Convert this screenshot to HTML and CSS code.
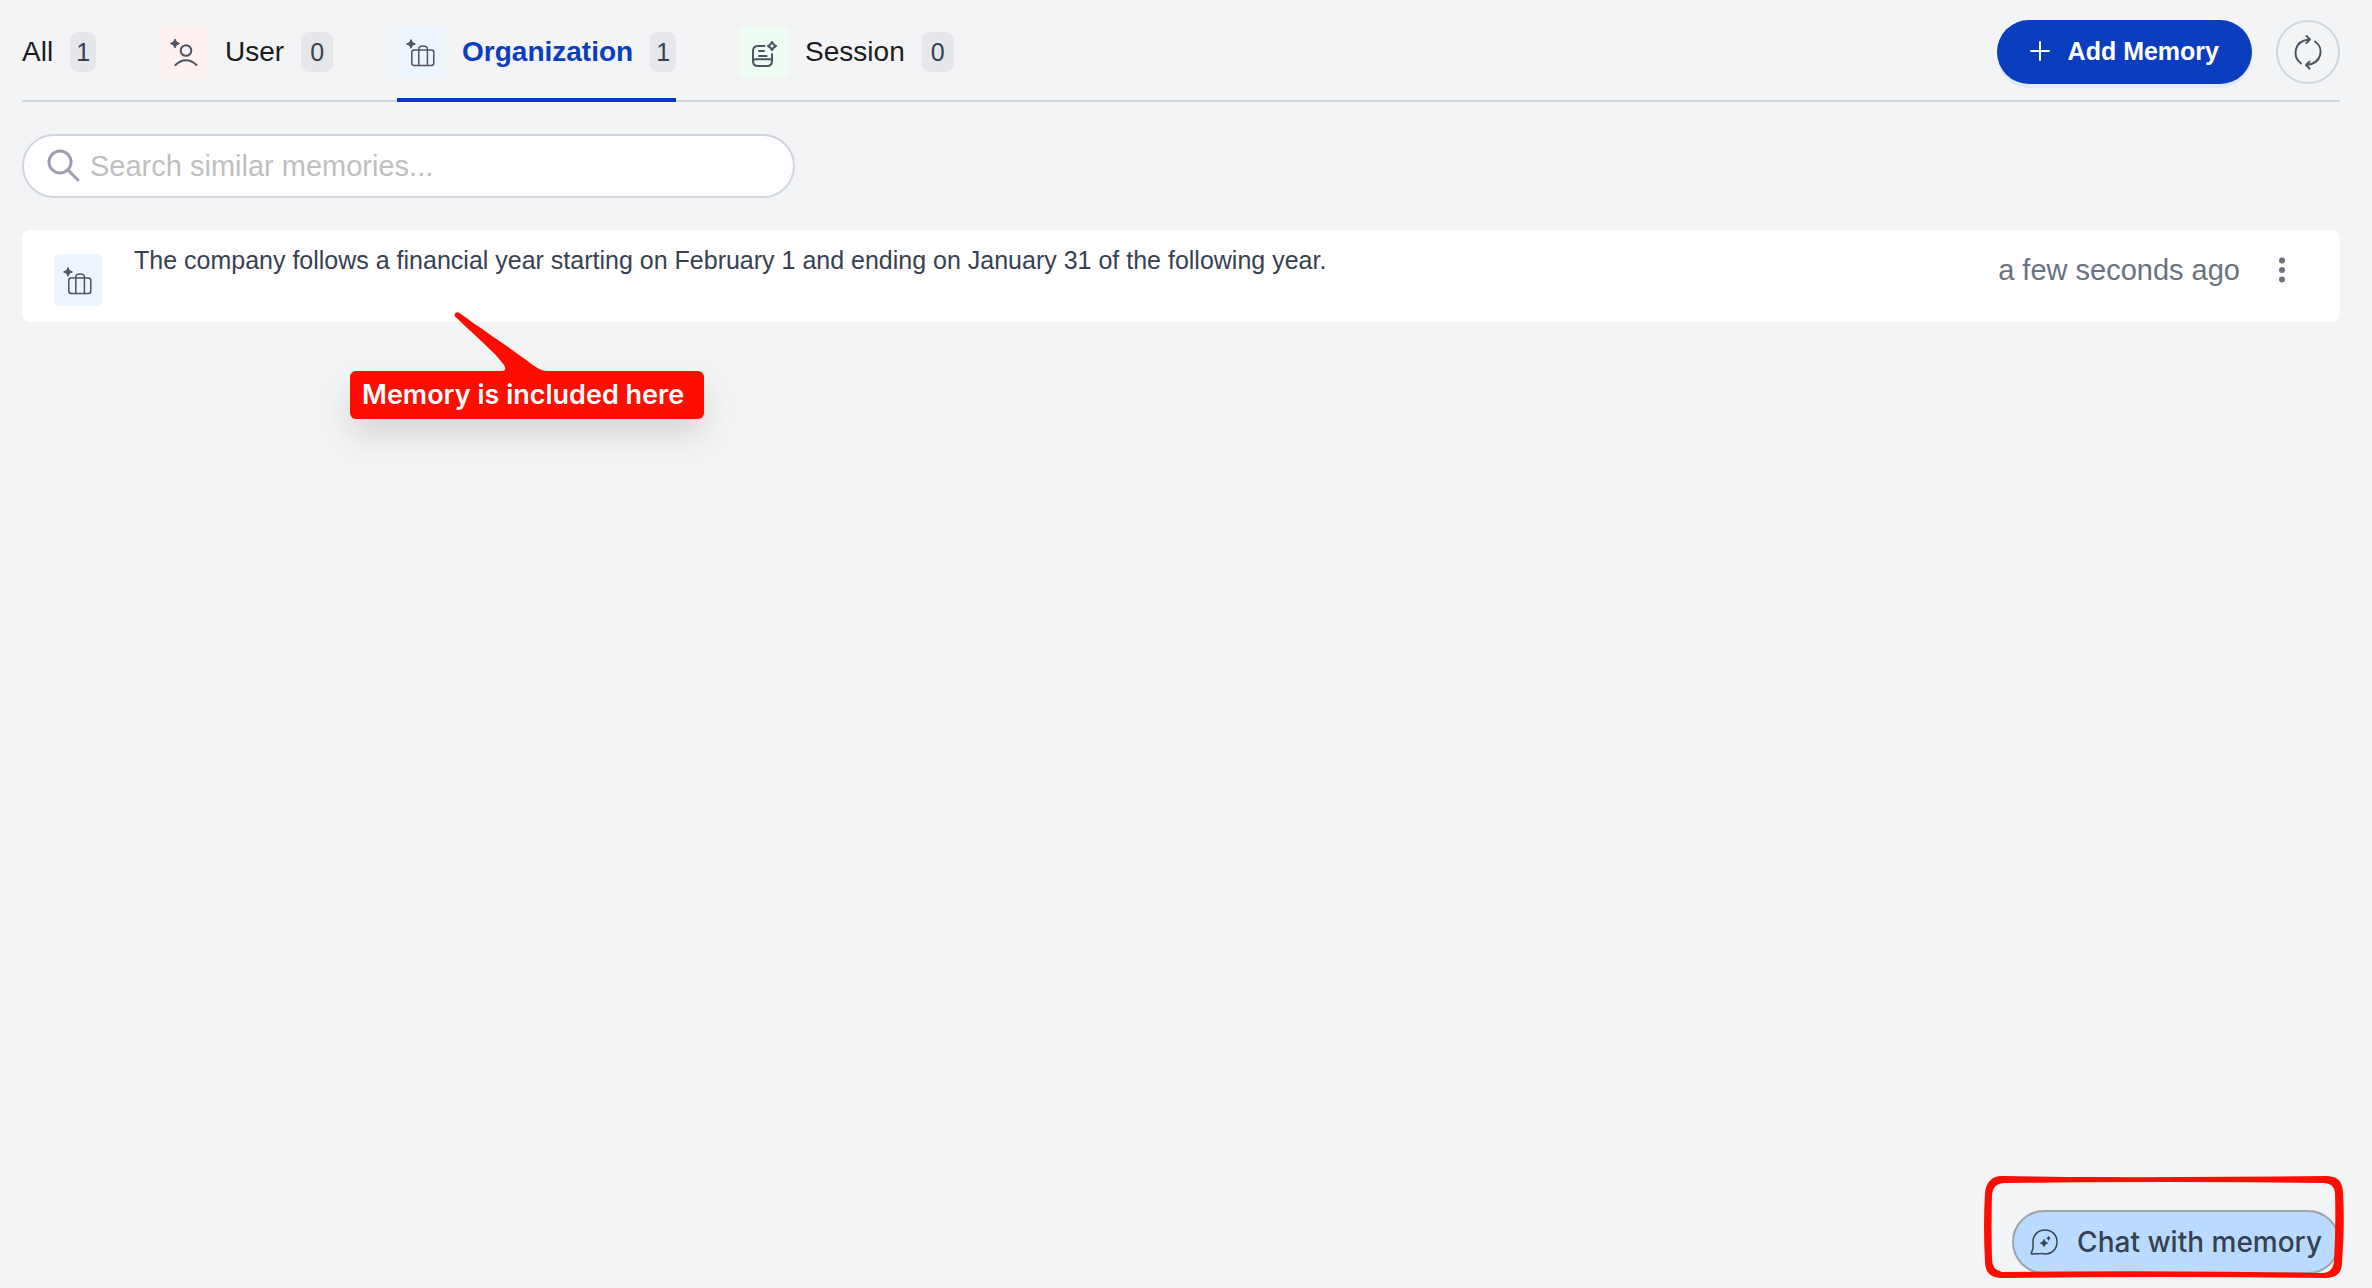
FILE: index.html
```html
<!DOCTYPE html>
<html lang="en">
  <head>
    <meta charset="UTF-8" />
    <meta name="viewport" content="width=device-width, initial-scale=1.0" />
    <title>Memory</title>
    <link rel="stylesheet" href="styles.css">
  </head>
  <body>
    <svg class="sprite" aria-hidden="true">
      <symbol id="icon-suitcase" viewBox="0 0 48 52">
        <path d="M14 13.5l1.4 3 3 1.4-3 1.4-1.4 3-1.4-3-3-1.4 3-1.4z" fill="currentColor" stroke="currentColor" stroke-width="1" />
        <g fill="none" stroke="currentColor" stroke-width="1.5">
          <rect x="14.8" y="24" width="22" height="15.5" rx="2.5" />
          <path d="M21.8 24v15.5M30.4 24v15.5M21.8 24v-1c0-1.8 1.6-3 4.3-3s4.3 1.2 4.3 3v1" />
        </g>
      </symbol>
    </svg>

    <header class="topbar">
      <nav class="tabs">
        <button class="tab" type="button">
          All <span class="badge badge-narrow">1</span>
        </button>
        <button class="tab" type="button">
          <span class="tile tile-user">
            <svg width="48" height="52" viewBox="0 0 48 52" aria-hidden="true">
              <path d="M15 13l1.500 3 3 1.500-3 1.500-1.500 3-1.500-3-3-1.500 3-1.500z" fill="currentColor" stroke="currentColor" stroke-width="1" />
              <g fill="none" stroke="currentColor" stroke-width="2" stroke-linecap="round">
                <circle cx="26" cy="24.5" r="5.3" />
                <path d="M15.5 39c6-6.500 15-6.500 21 0" />
              </g>
            </svg>
          </span>
          User <span class="badge">0</span>
        </button>
        <button class="tab active" type="button">
          <span class="tile tile-org">
            <svg width="48" height="52" aria-hidden="true"><use href="#icon-suitcase" /></svg>
          </span>
          Organization <span class="badge badge-narrow">1</span>
        </button>
        <button class="tab" type="button">
          <span class="tile tile-session">
            <svg width="48" height="52" viewBox="0 0 48 52" aria-hidden="true">
              <g fill="none" stroke="currentColor" stroke-width="2" stroke-linecap="round" stroke-linejoin="round">
                <path d="M24.5 20H18c-3.500 0-5 1.500-5 5v10c0 3.500 1.500 5 5 5h9c3.500 0 5-1.500 5-5v-7" />
                <path d="M13 35.5c0-1.500 1-2.300 2.500-2.300H32M19 25h5M19 30h7.500" />
                <path d="M32 16q1.200 2.800 4 4-2.800 1.200-4 4-1.200-2.800-4-4 2.800-1.200 4-4z" />
              </g>
            </svg>
          </span>
          Session <span class="badge">0</span>
        </button>
      </nav>
      <div class="actions">
        <button class="add-button" type="button">
          <svg width="20" height="20" viewBox="0 0 20 20" aria-hidden="true">
            <path d="M10 1v18M1 10h18" fill="none" stroke="currentColor" stroke-width="2" stroke-linecap="round" />
          </svg>
          Add Memory
        </button>
        <button class="refresh-button" type="button" aria-label="Refresh">
          <svg width="36" height="36" viewBox="0 0 36 36" fill="none" stroke="currentColor" stroke-width="2" stroke-linecap="round" stroke-linejoin="round" aria-hidden="true">
            <path d="M11 29.5C1.500 23 4 6.500 19.5 5.5M16.5 2l3.5 3.5-3.5 3.5" />
            <path d="M25 7.5c9.500 6.500 7 22-8.500 23.500M19.5 27.5L16 31l3.5 3.5" />
          </svg>
        </button>
      </div>
    </header>

    <main class="content">
      <label class="search">
        <svg width="34" height="34" viewBox="0 0 34 34" fill="none" stroke="currentColor" stroke-width="3" stroke-linecap="round" aria-hidden="true">
          <circle cx="13" cy="13" r="11" />
          <path d="M21 21l10 10" />
        </svg>
        <input type="text" aria-label="Search similar memories" placeholder="Search similar memories..." />
      </label>

      <article class="memory">
        <span class="tile tile-org">
          <svg width="48" height="52" aria-hidden="true"><use href="#icon-suitcase" /></svg>
        </span>
        <p class="memory-text">The company follows a financial year starting on February 1 and ending on January 31 of the following year.</p>
        <time class="memory-time">a few seconds ago</time>
        <button class="menu-button" type="button" aria-label="More options">
          <svg width="8" height="26" viewBox="0 0 8 26" fill="currentColor" aria-hidden="true">
            <circle cx="4" cy="3.5" r="3" />
            <circle cx="4" cy="13" r="3" />
            <circle cx="4" cy="22.5" r="3" />
          </svg>
        </button>
      </article>

      <div class="callout">
        <svg class="callout-tail" width="96" height="60" viewBox="0 0 96 60" aria-hidden="true">
          <path d="M1 4.5C-0.500 2 2.500-1 5.500 1C30 19 52 33 68 45C78 52 84 58 92 59V60H48V59C52 58 52 57 50 53C40 39 20 23 1 4.500z" fill="#ff0d00" />
        </svg>
        Memory is included here
      </div>
    </main>

    <div class="chat">
      <button class="chat-button" type="button">
        <svg width="28" height="28" viewBox="0 0 28 28" aria-hidden="true">
          <path d="M3 14C3 7 8 2 15 2s12 5 12 12-5 12-12 12c-1.500 0-2.500-1-4-.5L2 26c-1 0-1-.5-.5-1.500C4 21 3 18 3 14z" fill="none" stroke="currentColor" stroke-width="1.5" stroke-linejoin="round" />
          <path d="M14 11q.8 3.200 4 4-3.200.8-4 4-.8-3.200-4-4 3.200-.8 4-4zM18.500 8q.5 1.800 2 2.300-1.500.5-2 2.200-.5-1.700-2-2.200 1.500-.5 2-2.300z" fill="currentColor" stroke="currentColor" stroke-width=".4" />
        </svg>
        Chat with memory
      </button>
      <svg class="chat-highlight" width="360" height="104" viewBox="0 0 360 104" aria-hidden="true">
        <path d="M18 1C120 3 230 2 342 1C353 1 358 6 359 16Q361 52 358 88C358 98 352 103 341 103Q180 101 18 103C7 103 1 98 1 86Q-1 52 1 18C2 7 8 1 18 1zM21 8Q9 8 8 20Q7 52 8 84Q8 95 18 97Q180 95 338 98Q349 98 350 86Q352 52 351 18Q350 8 340 8Q180 6 21 8z" fill="#ff0d00" fill-rule="evenodd" />
      </svg>
    </div>
  </body>
</html>
```

FILE: styles.css
```css
* {
  box-sizing: border-box;
}

body {
  font-family: "Liberation Sans", Arial, sans-serif;
  font-size: 29px;
  line-height: 36px;
  background-color: #f3f4f6;
  color: #1c1c1f;
  margin: 0;
  padding: 0 32px 0 22px;
  min-height: 100vh;
}

button {
  font: inherit;
  color: inherit;
  background: none;
  border: none;
  padding: 0;
  cursor: pointer;
}

svg {
  display: block;
  flex: none;
}

.sprite {
  position: absolute;
  width: 0;
  height: 0;
}

.topbar {
  display: flex;
  justify-content: space-between;
  border-bottom: 2px solid #d1d5e0;
}

.tabs {
  display: flex;
  gap: 64px;
  margin-bottom: -2px;
}

.tab {
  display: flex;
  align-items: center;
  gap: 17px;
  height: 102px;
  padding-top: 6px;
  border-bottom: 4px solid transparent;
  font-size: 28px;
}

.tab.active {
  color: #0b3dbf;
  font-weight: bold;
  border-bottom-color: #0538c8;
}

.badge {
  padding: 0 9px;
  border-radius: 8px;
  background-color: #e5e7eb;
  color: #374151;
  font-size: 25px;
  font-weight: normal;
  line-height: 40px;
}

.badge-narrow {
  padding: 0 6px;
}

.tile {
  flex: none;
  border-radius: 4px;
  color: #4b5563;
}

.tile-user {
  background-color: #fff1f2;
}

.tile-org {
  background-color: #edf5ff;
}

.tile-session {
  background-color: #f0fdf4;
}

.actions {
  display: flex;
  gap: 24px;
  padding-top: 20px;
}

.add-button {
  display: flex;
  align-items: center;
  gap: 18px;
  height: 64px;
  padding: 0 33px 2px;
  border-radius: 32px;
  background-color: #0b3dbf;
  color: white;
  font-size: 25px;
  font-weight: bold;
  box-shadow: 0 4px 0 #e0eafa;
}

.refresh-button {
  display: grid;
  place-items: center;
  width: 64px;
  height: 64px;
  border: 2px solid #d1d5e0;
  border-radius: 50%;
  color: #4b5563;
}

.content {
  position: relative;
  padding-top: 32px;
  min-height: 480px;
}

.search {
  display: flex;
  align-items: center;
  gap: 9px;
  width: calc(100% / 3);
  height: 64px;
  padding: 0 23px;
  border: 2px solid #d1d5e0;
  border-radius: 32px;
  background-color: white;
  color: #9ca0b0;
}

.search input {
  flex: 1;
  min-width: 0;
  padding: 0;
  border: none;
  outline: none;
  background: none;
  color: #374151;
  font: inherit;
}

.search input::placeholder {
  color: #bfbfbf;
}

.memory {
  display: flex;
  align-items: flex-start;
  min-height: 92px;
  margin-top: 32px;
  padding: 12px 54px 16px 32px;
  border-radius: 8px;
  background-color: white;
}

.memory .tile {
  margin-top: 12px;
}

.memory-text {
  flex: 1;
  margin: 0;
  padding-left: 32px;
  color: #374151;
  font-size: 25px;
}

.memory-time {
  margin-top: 10px;
  color: #6b7280;
}

.menu-button {
  margin: 15px 0 0 38px;
  color: #6b7280;
}

/* red note under the memory row */
.callout {
  position: absolute;
  top: 269px;
  left: 328px;
  padding: 0 20px 0 12px;
  border-radius: 6px;
  background-color: #ff0d00;
  color: white;
  font-family: Inter, sans-serif;
  font-size: 27px;
  font-weight: 600;
  line-height: 48px;
  white-space: nowrap;
  box-shadow: 0 16px 32px rgba(0, 0, 0, 0.12);
}

.callout-tail {
  position: absolute;
  top: -59px;
  left: 104px;
}

.chat {
  position: fixed;
  right: 32px;
  bottom: 14px;
}

.chat-button {
  display: flex;
  align-items: center;
  gap: 19px;
  height: 64px;
  padding: 0 16px;
  border: 2px solid #9ca3af;
  border-radius: 32px;
  background-color: #badbff;
  color: #374151;
  font-family: Inter, sans-serif;
  font-size: 28px;
  font-weight: 500;
}

.chat-highlight {
  position: absolute;
  right: -4px;
  bottom: -5px;
}
```
